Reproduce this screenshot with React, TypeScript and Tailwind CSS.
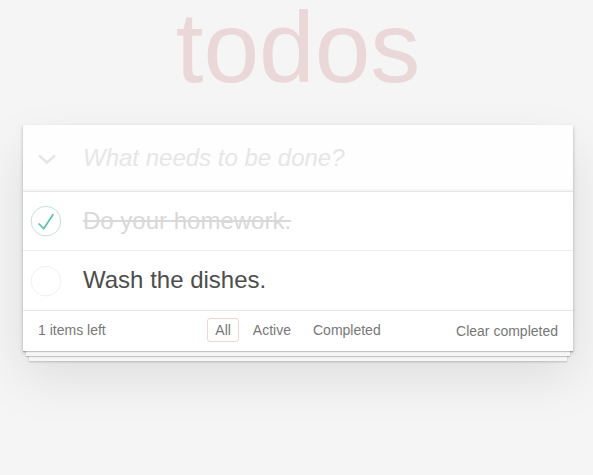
import { useState } from "react"

interface Todo {
  id: number
  title: string
  completed: boolean
}

const INITIAL_TODOS: Todo[] = [
  { id: 1, title: "Do your homework.", completed: true },
  { id: 2, title: "Wash the dishes.", completed: false },
]

const FILTERS = ["All", "Active", "Completed"]

function ToggleCircle({ checked }: { checked: boolean }) {
  return (
    <svg width="40" height="40" viewBox="-10 -18 100 135" className="flex-none">
      <circle
        cx="50"
        cy="50"
        r="50"
        fill="none"
        stroke={checked ? "#bddad5" : "#ededed"}
        strokeWidth="3"
      />
      {checked ? (
        <path fill="#5dc2af" d="M72 25L42 71 27 56l-4 4 20 20 34-52z" />
      ) : null}
    </svg>
  )
}

function Chevron() {
  return (
    <svg width="20" height="12" viewBox="0 0 20 12" className="text-[#e6e6e6]">
      <path
        d="M2 2.5L10 9.5L18 2.5"
        fill="none"
        stroke="currentColor"
        strokeWidth="2.6"
        strokeLinejoin="miter"
      />
    </svg>
  )
}

export default function App() {
  const [todos] = useState<Todo[]>(INITIAL_TODOS)
  const [filter] = useState("All")
  const left = todos.filter((t) => !t.completed).length

  return (
    <div className="min-h-screen bg-[#f5f5f5] font-['Liberation_Sans',Arial,sans-serif] font-light text-[14px] leading-[1.4em] text-[#4d4d4d]">
      <div className="ml-[23px] w-[550px]">
        <h1 className="text-center text-[100px] font-thin leading-[94px] text-[rgba(175,47,47,0.15)]">
          todos
        </h1>

        <section className="mt-[31px] bg-white shadow-[0_1px_1px_rgba(0,0,0,0.2),0_8px_0_-3px_#f6f6f6,0_9px_1px_-3px_rgba(0,0,0,0.2),0_16px_0_-6px_#f6f6f6,0_17px_2px_-6px_rgba(0,0,0,0.2),0_2px_4px_0_rgba(0,0,0,0.2),0_25px_50px_0_rgba(0,0,0,0.1)]">
          <header className="flex h-[65.6px] items-center bg-[rgba(0,0,0,0.003)] shadow-[inset_0_-2px_1px_rgba(0,0,0,0.03)]">
            <div className="flex w-[60px] flex-none justify-center pr-[13px] pt-[3px]">
              <Chevron />
            </div>
            <input
              className="h-full flex-1 bg-transparent pr-4 text-[24px] font-light leading-[1.4em] text-[#4d4d4d] outline-none placeholder:italic placeholder:text-[#e6e6e6]"
              placeholder="What needs to be done?"
            />
          </header>

          <ul className="border-t border-[#e6e6e6]">
            {todos.map((todo, i) => (
              <li
                key={todo.id}
                className={
                  i < todos.length - 1
                    ? "flex items-center border-b border-[#ededed]"
                    : "flex items-center"
                }
              >
                <ToggleCircle checked={todo.completed} />
                <span
                  className={
                    todo.completed
                      ? "ml-5 py-[15px] pr-[15px] text-[24px] leading-[1.2] text-[#d9d9d9] line-through"
                      : "ml-5 py-[15px] pr-[15px] text-[24px] leading-[1.2] text-[#4d4d4d]"
                  }
                >
                  {todo.title}
                </span>
              </li>
            ))}
          </ul>

          <footer className="grid h-[41px] grid-cols-[1fr_auto_1fr] items-center border-t border-[#e6e6e6] px-[15px] text-[#777]">
            <span className="text-left">{left} items left</span>
            <ul className="flex gap-[6px]">
              {FILTERS.map((f) => (
                <li key={f}>
                  <a
                    href="#"
                    className={
                      f === filter
                        ? "rounded-[3px] border border-[rgba(175,47,47,0.2)] px-[7px] py-[3px] text-[#777]"
                        : "rounded-[3px] border border-transparent px-[7px] py-[3px] text-[#777]"
                    }
                  >
                    {f}
                  </a>
                </li>
              ))}
            </ul>
            <button className="justify-self-end text-[14px] font-light leading-[20px] text-[#777]">
              Clear completed
            </button>
          </footer>
        </section>
      </div>
    </div>
  )
}
